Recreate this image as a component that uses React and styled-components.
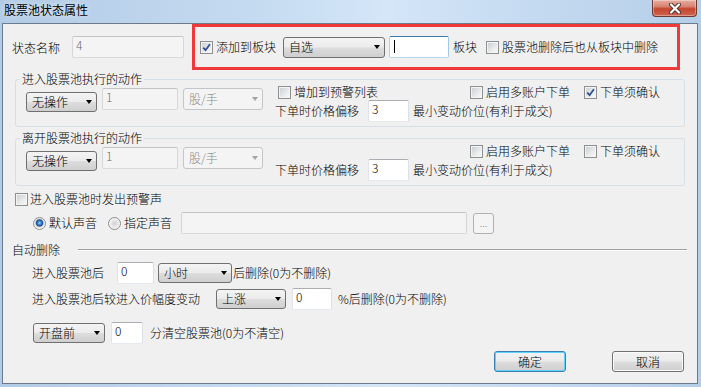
import React from "react";
import styled, { createGlobalStyle } from "styled-components";

const GlobalStyle = createGlobalStyle`
	html, body {
		margin: 0;
		padding: 0;
	}
	body {
		font-family: "Noto Sans CJK SC", "Noto Sans", sans-serif;
		font-size: 12px;
		font-weight: 300;
		color: #000;
		background: #fff;
	}
`;

const Window = styled.div`
	width: 701px;
	height: 387px;
	display: flex;
	flex-direction: column;
	background: linear-gradient(90deg, #b2cbe6 0%, #c4daf0 35%, #d4e6f8 55%, #c2d8ef 80%, #b5cee8 100%);
	overflow: hidden;
`;

const TitleBar = styled.div`
	height: 23px;
	flex: none;
	display: flex;
	justify-content: space-between;
	align-items: flex-start;
`;

const Title = styled.div`
	padding-left: 4px;
	line-height: 20px;
	font-size: 12px;
	font-weight: 400;
	color: #000;
	text-shadow: 0 0 6px rgba(255, 255, 255, 0.9);
`;

const CloseButton = styled.div`
	width: 45px;
	height: 17px;
	margin-right: 4px;
	box-sizing: border-box;
	border: 1px solid #6b3a33;
	border-top: none;
	border-radius: 0 0 4px 4px;
	background: linear-gradient(#e6ad9f 0%, #d98472 40%, #c5462f 55%, #cf6550 100%);
	box-shadow: inset 0 0 0 1px rgba(255, 255, 255, 0.35);
	display: flex;
	align-items: center;
	justify-content: center;
`;

const Body = styled.div`
	flex: 1;
	margin: 0 3px 3px 2px;
	border: 1px solid #6c7b8b;
	background: #f0f0f0;
	display: flex;
	flex-direction: column;
`;

const TopRow = styled.div`
	display: flex;
	align-items: center;
	height: 46px;
	flex: none;
`;

const FieldLabel = styled.span`
	margin-left: 9px;
	width: 60px;
	white-space: nowrap;
`;

const Highlight = styled.div`
	margin-left: 8px;
	width: 488px;
	height: 46px;
	box-sizing: border-box;
	border: 3px solid #f03a3a;
	padding-left: 5px;
	display: flex;
	align-items: center;
`;

const Text = styled.span`
	margin-left: ${pr => pr.$ml || 0}px;
	white-space: nowrap;
	line-height: 14px;
	flex: none;
`;

const CheckItem = styled.label`
	display: inline-flex;
	align-items: center;
	gap: ${pr => pr.$gap ?? 3}px;
	margin-left: ${pr => pr.$ml || 0}px;
	white-space: nowrap;
	line-height: 14px;
	flex: none;
`;

const Box = styled.span`
	width: 13px;
	height: 13px;
	box-sizing: border-box;
	border: 1px solid #8e8f8f;
	background: linear-gradient(135deg, #c9cdd2 0%, #e6e8ea 55%, #fbfbfb 100%);
	box-shadow: inset 0 0 0 1px #f4f4f4;
	display: flex;
	align-items: center;
	justify-content: center;
	flex: none;
`;

const RadioDot = styled.span`
	width: 13px;
	height: 13px;
	box-sizing: border-box;
	border-radius: 50%;
	border: 1px solid #8e8f8f;
	flex: none;
	background: ${pr => pr.$on
		? "radial-gradient(circle at 50% 45%, #a6e0ff 0px, #3a8ad8 1.6px, #1b4f93 3.2px, #9aa6b2 3.8px, #e4e4e4 4.4px, #fafafa 6px)"
		: "radial-gradient(circle at 50% 50%, #cfcfcf 0px, #e2e2e2 2.5px, #f8f8f8 6px)"};
`;

const Combo = styled.div`
	width: ${pr => pr.$w}px;
	height: ${pr => pr.$h || 20}px;
	margin-left: ${pr => pr.$ml || 0}px;
	margin-top: ${pr => pr.$mt || 0}px;
	box-sizing: border-box;
	border: 1px solid ${pr => pr.$disabled ? "#c3c6c9" : "#707070"};
	border-radius: 3px;
	background: ${pr => pr.$disabled
		? "#f4f4f4"
		: "linear-gradient(#f4f4f4 0%, #ebebeb 48%, #dddddd 52%, #cfcfcf 100%)"};
	color: ${pr => pr.$disabled ? "#8a8a8a" : "#000"};
	display: flex;
	align-items: center;
	justify-content: space-between;
	padding: 0 4px 0 5px;
	line-height: 14px;
	white-space: nowrap;
	flex: none;
`;

const Arrow = styled.span`
	width: 0;
	height: 0;
	border-left: 3.5px solid transparent;
	border-right: 3.5px solid transparent;
	border-top: 4px solid ${pr => pr.$disabled ? "#a5a5a5" : "#000"};
	flex: none;
`;

const TextBox = styled.div`
	width: ${pr => pr.$w}px;
	height: 22px;
	margin-left: ${pr => pr.$ml || 0}px;
	box-sizing: border-box;
	border: 1px solid;
	border-color: ${pr => pr.$focus
		? "#3d7bad #a4c9e3 #b7d9ed #b5cfe7"
		: pr.$disabled
			? "#c2c4c8 #d4d6d9 #d8dadc #d4d6d9"
			: "#abadb3 #dbdfe6 #e3e9ef #e2e3ea"};
	border-radius: 2px;
	background: ${pr => pr.$disabled ? "#f4f4f4" : "#fff"};
	color: ${pr => pr.$disabled ? "#6d6d6d" : "#000"};
	padding: 1px 3px;
	line-height: 14px;
	display: flex;
	align-items: flex-start;
	flex: none;
`;

const Caret = styled.span`
	width: 1px;
	height: 13px;
	margin: 2px 0 0 1px;
	background: #000;
`;

const Group = styled.fieldset`
	margin: ${pr => pr.$top}px 12px 0 12px;
	padding: 0 10px 4px 10px;
	border: 1px solid #d5dfe5;
	border-radius: 3px;
	min-width: 0;
	flex: none;
`;

const Legend = styled.legend`
	margin-left: -6px;
	padding: 0 2px;
	line-height: 12px;
	font-size: 12px;
`;

const GroupBody = styled.div`
	display: flex;
	align-items: flex-start;
`;

const LeftCluster = styled.div`
	display: flex;
	align-items: flex-start;
	gap: 5px;
	margin-top: 3px;
`;

const RightCluster = styled.div`
	display: flex;
	flex-direction: column;
	margin-left: 12px;
`;

const CheckGrid = styled.div`
	display: grid;
	grid-template-columns: 192px 114px auto;
	align-items: center;
	height: 14px;
	padding-left: 3px;
`;

const OffsetRow = styled.div`
	display: flex;
	align-items: center;
	height: 22px;
	margin-top: 1px;
`;

const Row = styled.div`
	display: flex;
	align-items: center;
	height: ${pr => pr.$h || 22}px;
	margin-top: ${pr => pr.$top || 0}px;
	padding-left: ${pr => pr.$left || 0}px;
	flex: none;
`;

const BrowseButton = styled.div`
	width: 21px;
	height: 21px;
	margin-left: 6px;
	box-sizing: border-box;
	border: 1px solid #adb2b5;
	border-radius: 3px;
	background: #f4f4f4;
	color: #7a7a7a;
	display: flex;
	align-items: center;
	justify-content: center;
	font-size: 10px;
	line-height: 10px;
	flex: none;
`;

const Separator = styled.div`
	flex: 1;
	margin: 0 10px 0 18px;
	border-top: 1px solid #a0a0a0;
	border-bottom: 1px solid #ffffff;
`;

const ButtonRow = styled.div`
	display: flex;
	justify-content: flex-end;
	gap: 46px;
	padding-right: 13px;
	margin-top: 7px;
`;

const DlgButton = styled.button`
	width: 72px;
	height: 21px;
	padding: 0;
	box-sizing: border-box;
	border: 1px solid ${pr => pr.$default ? "#3c7fb1" : "#707070"};
	border-radius: 3px;
	background: linear-gradient(#f2f2f2 0%, #ebebeb 48%, #dddddd 52%, #cfcfcf 100%);
	box-shadow: inset 0 0 0 1px ${pr => pr.$default ? "#5fd3fa" : "#fbfbfb"};
	font-family: inherit;
	font-size: 12px;
	font-weight: 300;
	line-height: 14px;
	color: #000;
`;

const Check = ({ checked, children, ml, gap }) => (
	<CheckItem $ml={ml} $gap={gap}>
		<Box>
			{checked && (
				<svg width="9" height="9" viewBox="0 0 9 9">
					<path d="M1.2 4.6 L3.6 7.2 L7.9 1.2" fill="none" stroke="#2f4f93" strokeWidth="1.8" />
				</svg>
			)}
		</Box>
		{children}
	</CheckItem>
);

const Select = ({ w, h, ml, mt, disabled, children }) => (
	<Combo $w={w} $h={h} $ml={ml} $mt={mt} $disabled={disabled}>
		<span>{children}</span>
		<Arrow $disabled={disabled} />
	</Combo>
);

const ActionGroup = ({ title, top, warn, confirm }) => (
	<Group $top={top}>
		<Legend>{title}</Legend>
		<GroupBody>
			<LeftCluster>
				<Select w={71} mt={4}>无操作</Select>
				<TextBox $w={76} $disabled>1</TextBox>
				<Select w={80} h={22} disabled>股/手</Select>
			</LeftCluster>
			<RightCluster>
				<CheckGrid>
					{warn ? <Check>增加到预警列表</Check> : <span />}
					<Check>启用多账户下单</Check>
					<Check checked={confirm}>下单须确认</Check>
				</CheckGrid>
				<OffsetRow>
					<Text>下单时价格偏移</Text>
					<TextBox $w={41} $ml={9}>3</TextBox>
					<Text $ml={4}>最小变动价位(有利于成交)</Text>
				</OffsetRow>
			</RightCluster>
		</GroupBody>
	</Group>
);

const App = () => {
	return (
		<>
			<GlobalStyle />
			<Window>
				<TitleBar>
					<Title>股票池状态属性</Title>
					<CloseButton>
						<svg width="14" height="11" viewBox="0 0 14 11">
							<path d="M3 1.5 L11 9.5 M11 1.5 L3 9.5" stroke="#4a3430" strokeWidth="4" strokeLinecap="round" />
							<path d="M3 1.5 L11 9.5 M11 1.5 L3 9.5" stroke="#ffffff" strokeWidth="2.2" strokeLinecap="round" />
						</svg>
					</CloseButton>
				</TitleBar>
				<Body>
					<TopRow>
						<FieldLabel>状态名称</FieldLabel>
						<TextBox $w={112} $disabled>4</TextBox>
						<Highlight>
							<Check checked>添加到板块</Check>
							<Select w={102} h={21} ml={7}>自选</Select>
							<TextBox $w={60} $ml={4} $focus><Caret /></TextBox>
							<Text $ml={4}>板块</Text>
							<Check ml={9}>股票池删除后也从板块中删除</Check>
						</Highlight>
					</TopRow>

					<ActionGroup title="进入股票池执行的动作" top={3} warn confirm />
					<ActionGroup title="离开股票池执行的动作" top={5} />

					<Row $top={6} $left={12} $h={14}>
						<Check gap={2}>进入股票池时发出预警声</Check>
					</Row>
					<Row $top={6} $left={30}>
						<CheckItem>
							<RadioDot $on />
							默认声音
						</CheckItem>
						<CheckItem $ml={11}>
							<RadioDot />
							指定声音
						</CheckItem>
						<TextBox $w={286} $ml={9} $disabled />
						<BrowseButton>...</BrowseButton>
					</Row>

					<Row $top={9} $left={9} $h={14}>
						<Text>自动删除</Text>
						<Separator />
					</Row>
					<Row $top={5} $left={29}>
						<Text>进入股票池后</Text>
						<TextBox $w={37} $ml={13}>0</TextBox>
						<Select w={74} ml={4}>小时</Select>
						<Text $ml={1}>后删除(0为不删除)</Text>
					</Row>
					<Row $top={4} $left={29}>
						<Text>进入股票池后较进入价幅度变动</Text>
						<Select w={70} ml={16}>上涨</Select>
						<TextBox $w={40} $ml={6}>0</TextBox>
						<Text $ml={6}>%后删除(0为不删除)</Text>
					</Row>
					<Row $top={12} $left={30}>
						<Select w={72}>开盘前</Select>
						<TextBox $w={32} $ml={6}>0</TextBox>
						<Text $ml={7}>分清空股票池(0为不清空)</Text>
					</Row>

					<ButtonRow>
						<DlgButton $default>确定</DlgButton>
						<DlgButton>取消</DlgButton>
					</ButtonRow>
				</Body>
			</Window>
		</>
	);
};

export default App;
